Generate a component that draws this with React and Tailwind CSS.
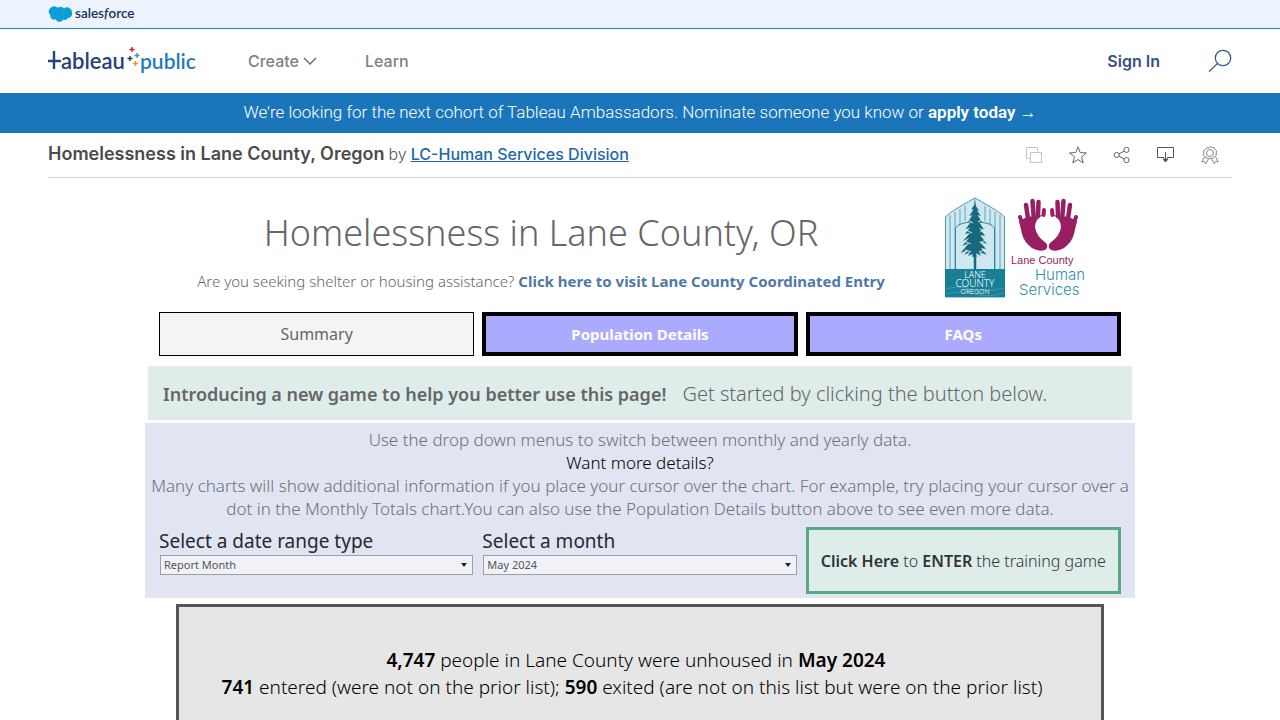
import React from 'react';

const sans = "font-['Inter','Liberation_Sans',sans-serif]";

const SalesforceLogo = () => (
    <a href="#" aria-label="Salesforce" className="block">
        <svg width="88" height="18" viewBox="0 0 88 18">
            <path
                d="M9.8 2.8A4.9 4.9 0 0 1 16 3.5a4.8 4.8 0 0 1 7.9 4.2A4.2 4.2 0 0 1 20 13.1a3.6 3.6 0 0 1-4.7 1.5 4.1 4.1 0 0 1-7.6-.3A3.8 3.8 0 0 1 2.4 10 4.3 4.3 0 0 1 2 3.6a4.8 4.8 0 0 1 7.8-.8Z"
                fill="#0d9dda"
            />
            <text x="27" y="13" fontFamily="Lato, sans-serif" fontSize="13.500" fontWeight="600" fill="#16325c">
                sales<tspan fontStyle="italic">f</tspan>orce
            </text>
        </svg>
    </a>
);

const TableauLogo = () => (
    <a href="#" aria-label="Tableau Public" className="block">
        <svg width="150" height="32" viewBox="0 0 150 32">
            <path d="M0 16h13M6 6v18" stroke="#1f457e" strokeWidth="2.4" fill="none" />
            <text x="13" y="24" fontFamily="Lato, sans-serif" fontSize="22" fontWeight="600" fill="#27407a">ableau</text>
            <g fill="none" strokeWidth="1.4">
                <path d="M84 2v5M81.500 4.500h5" stroke="#c72035" />
                <path d="M89 8v5M86.500 10.500h5" stroke="#5b879b" />
                <path d="M82 11v5M79.500 13.500h5" stroke="#1f3a5f" />
                <path d="M87.500 16v5M85 18.500h5" stroke="#eb912c" />
            </g>
            <text x="92" y="24" fontFamily="Lato, sans-serif" fontSize="21" fontWeight="600" fill="#1f7bc0">public</text>
        </svg>
    </a>
);

const actions = [
    {
        label: 'Make a copy',
        color: '#c4c4c4',
        icon: <path d="M5.500 12.500h-4v-11h11v4M5.500 6.500h11v10h-11z" />,
    },
    {
        label: 'Favorite',
        color: '#666666',
        icon: <path d="m9 .8 2.200 5.800 6.200.3-4.900 3.900 1.700 6.200L9 13.500 3.800 17l1.700-6.200L.6 6.900l6.200-.3z" />,
    },
    {
        label: 'Share',
        color: '#666666',
        icon: (
            <>
                <circle cx="3.700" cy="9" r="2.600" />
                <circle cx="13.500" cy="3.900" r="2.600" />
                <circle cx="13.500" cy="14.100" r="2.600" />
                <path d="m6 7.800 5.200-2.700M6 10.200l5.200 2.700" />
            </>
        ),
    },
    {
        label: 'Download',
        color: '#555555',
        icon: (
            <>
                <path d="M7 11.500H.500v-10h16v10H10M8.500 6v10" />
                <path d="m6 13 2.500 3L11 13z" fill="#555555" />
            </>
        ),
    },
    {
        label: 'Nominate for Viz of the Day',
        color: '#888888',
        icon: (
            <>
                <circle cx="9" cy="7" r="3.500" />
                <path d="m9 .5 1.900 1 2.200.1.900 2 1.700 1.400-.5 2.100.2 2.200-1.900 1.200-1.200 1.800-2.200-.2L9 13l-1.900-1-2.200.1-1-1.900L2.300 9l.6-2-.3-2.200 1.900-1.200 1.200-1.900 2.200.2z" />
                <path d="m3.500 10.800-2.800 5 2.700-.3 1.300 2.400 2.800-5M14.500 10.800l2.800 5-2.700-.3-1.300 2.400-2.800-5" />
            </>
        ),
    },
];

const LaneCountyLogo = () => (
    <svg width="60" height="101" viewBox="0 0 60 101" role="img" aria-label="Lane County Oregon">
        <path d="M.5 100V20Q3 16 30 1q27 15 29.500 19v80z" fill="#cfe7ef" stroke="#4b9caf" />
        <path d="M5 18v54M10 15v57M15 12v18M20 9v15M40 9v15M45 12v18M50 15v57M55 18v54" stroke="#5fa5b8" fill="none" />
        <path d="M10.500 72V31Q14 25 30 25t19.500 6v41" fill="#cfe7ef" stroke="#2c879c" />
        <path
            transform="translate(4.500 0) scale(.85 1)"
            d="m30 1-1 7-3 4 2 1-5 6 4-1-6 8 5-2-7 8 5-1-6 6 6-1-8 8 7-3-8 8 8-3-10 10 9-3-5 5 7-3-2 4 5-2v3h5l-1-4 6 3-2-4 9 3-7-7 6 1-8-8 9 3-8-9 6 1-7-8 6 2-7-9 5 2-6-8 4 1-5-6 3 1-4-5z"
            fill="#176a7d"
        />
        <path d="M30 45v28" stroke="#176a7d" strokeWidth="2.500" />
        <path d="M21 33l6 3M19 44l7 3M41 31l-6 4M43 42l-8 4M20 53l6 2M42 52l-8 3M24 24l4 2M37 22l-4 3" stroke="#cfe7ef" />
        <path d="M0 72h60v28H0z" fill="#197f97" />
        <path d="M1 92q12-4 24 0t34-1M1 97q14-4 28 0t30-1" stroke="#4fa3b5" strokeWidth=".7" fill="none" />
        <g fontFamily="'Noto Sans', sans-serif" fill="#ffffff" textAnchor="middle">
            <text x="30" y="81" fontSize="9">LANE</text>
            <text x="30" y="90" fontSize="10">COUNTY</text>
            <text x="30" y="97" fontSize="7">OREGON</text>
        </g>
    </svg>
);

// left hand, mirrored for the right one
const Hand = () => (
    <g stroke="#981e62" fill="none" strokeLinecap="round">
        <path d="M2 20 7 36" strokeWidth="4" />
        <path d="M8 8 11 28" strokeWidth="4.500" />
        <path d="M14.500 4 16 24" strokeWidth="4.500" />
        <path d="M20.500 5l-.5 14" strokeWidth="4.500" />
        <path d="M26 13l-.5 5" strokeWidth="4" />
        <path
            d="M1 24 9 20 25 18Q17 22 17 30q1 9 11 16 3 4-1 7-6 2-13-2Q6 45 4 37z"
            fill="#981e62"
            stroke="none"
        />
    </g>
);

const HumanServicesLogo = () => (
    <svg width="78" height="101" viewBox="0 0 78 101" role="img" aria-label="Lane County Human Services">
        <g transform="translate(7 0)"><Hand /></g>
        <g transform="translate(67 0) scale(-1 1)"><Hand /></g>
        <g fontFamily="'Liberation Sans', sans-serif">
            <text x="0" y="67" fontSize="11" fill="#981e62">Lane County</text>
            <text x="24" y="83" fontFamily="Inter, sans-serif" fontSize="15" fontWeight="300" fill="#2f8fa6">Human</text>
            <text x="8" y="98" fontFamily="Inter, sans-serif" fontSize="15" fontWeight="300" fill="#2f8fa6">Services</text>
        </g>
    </svg>
);

const filters = [
    { id: 'range-type', label: 'Select a date range type', options: ['Report Month', 'Report Year'] },
    { id: 'month', label: 'Select a month', options: ['May 2024', 'April 2024'] },
];

const SiteHeader = () => (
    <header className={sans}>
        <div className="h-[29px] px-12 flex items-center bg-[#ecf3fd] border-b border-[#1f86c0]">
            <SalesforceLogo />
        </div>
        <div className="h-16 px-12 flex items-center justify-between bg-white">
            <div className="flex items-center">
                <TableauLogo />
                <nav className="ml-[50px] flex items-center gap-12 text-base font-medium text-[#808080]">
                    <button className="flex items-center gap-1">
                        Create
                        <svg width="14" height="8" viewBox="0 0 14 8" fill="none" stroke="#707070" strokeWidth="1.5">
                            <path d="m1 1 6 6 6-6" />
                        </svg>
                    </button>
                    <a href="#">Learn</a>
                </nav>
            </div>
            <div className="flex items-center gap-12">
                <a href="#" className="text-base font-semibold text-[#355085]">Sign In</a>
                <button aria-label="Search">
                    <svg width="24" height="24" viewBox="0 0 24 24" fill="none" stroke="#355c91" strokeWidth="1.3">
                        <circle cx="15" cy="9" r="7.7" />
                        <path d="m9.500 14.500-8.500 8" />
                    </svg>
                </button>
            </div>
        </div>
        <div className="h-10 flex items-center justify-center bg-[#1b75bb] font-['Roboto',sans-serif] text-[17px] font-light text-white">
            <p>
                We're looking for the next cohort of Tableau Ambassadors. Nominate someone you know or{' '}
                <a href="#" className="font-semibold">apply today</a> →
            </p>
        </div>
    </header>
);

const VizTitle = () => (
    <div className={`mx-12 h-[45px] flex items-center justify-between border-b border-[#d4d4d4] ${sans}`}>
        <div className="pb-0.5 flex items-baseline gap-1 text-[#555555]">
            <h1 className="text-lg font-semibold text-[#4b4b4b]">Homelessness in Lane County, Oregon</h1>
            <span className="text-base font-light">by</span>
            <a href="#" className="text-base font-medium text-[#1b69a6] underline">LC-Human Services Division</a>
        </div>
        <div className="flex items-center gap-[26px] pr-[13px]">
            {actions.map(({ label, color, icon }) => (
                <button key={label} aria-label={label}>
                    <svg width="18" height="18" viewBox="0 0 18 18" fill="none" stroke={color}>
                        {icon}
                    </svg>
                </button>
            ))}
        </div>
    </div>
);

const Dashboard = () => (
    <main className="max-w-[990px] mx-auto pt-[19px] font-['Noto_Sans',sans-serif] font-light text-[#666666]">
        <div className="flex">
            <div className="w-[788px] pl-1 text-center">
                <h2 className="pt-2 text-4xl leading-[56px]">Homelessness in Lane County, OR</h2>
                <p className="pt-2 text-[15px] leading-6">
                    Are you seeking shelter or housing assistance?{' '}
                    <a href="#" className="font-bold text-[#4e79a7]">Click here to visit Lane County Coordinated Entry</a>
                </p>
            </div>
            <div className="ml-3 flex gap-1.5">
                <LaneCountyLogo />
                <HumanServicesLogo />
            </div>
        </div>

        <div className="mt-3.5 px-3.5 grid grid-cols-3 gap-2 text-[15px]">
            <button className="h-11 border border-black bg-[#f4f4f4] text-base font-normal">Summary</button>
            <button className="h-11 border-4 border-black bg-[#aaaaff] font-bold text-white">Population Details</button>
            <button className="h-11 border-4 border-black bg-[#aaaaff] font-bold text-white">FAQs</button>
        </div>

        <div className="mt-2.5 mx-[3px] h-[54px] pt-0.5 px-[15px] flex items-center gap-4 bg-[#dfedea]">
            <strong className="text-lg font-semibold">Introducing a new game to help you better use this page!</strong>
            <span className="text-xl">Get started by clicking the button below.</span>
        </div>

        <section className="mt-[3px] px-1 pt-[5px] pb-1 bg-[#e1e5f1]">
            <div className="text-center text-[17px] leading-[23px] text-[#6e7079]">
                <p>Use the drop down menus to switch between monthly and yearly data.</p>
                <p className="text-black">Want more details?</p>
                <p>
                    Many charts will show additional information if you place your cursor over the chart. For example, try placing your cursor over a
                    <br />
                    dot in the Monthly Totals chart.You can also use the Population Details button above to see even more data.
                </p>
            </div>
            <div className="mt-[7px] px-2.5 grid grid-cols-3 gap-2">
                {filters.map(({ id, label, options }) => (
                    <div key={id}>
                        <label htmlFor={id} className="block text-[19px] leading-7 font-normal text-[#26282f]">{label}</label>
                        <div className="relative mx-px">
                            <select
                                id={id}
                                className="block w-full h-5 pl-[3px] appearance-none border border-[#9c9fa8] bg-[#f0f2f8] text-[11px] font-normal text-[#555555]"
                            >
                                {options.map((option) => <option key={option}>{option}</option>)}
                            </select>
                            <svg className="absolute right-1.5 top-2 pointer-events-none" width="6" height="4" viewBox="0 0 6 4">
                                <path d="M0 0h6L3 4z" fill="#222222" />
                            </svg>
                        </div>
                    </div>
                ))}
                <button className="h-[67px] border-[3px] border-[#59a985] bg-[#dfedea] text-base text-[#333333]">
                    <b className="font-semibold">Click Here</b> to <b className="font-semibold">ENTER</b> the training game
                </button>
            </div>
        </section>

        <section className="mt-1.5 mx-[31px] pt-10 pb-12 border-[3px] border-[#555555] bg-[#e6e6e6] text-center text-[19px] leading-[27px] text-black">
            <p className="pr-2"><b className="font-semibold">4,747</b> people in Lane County were unhoused in <b className="font-semibold">May 2024</b></p>
            <p className="pr-4"><b className="font-semibold">741</b> entered (were not on the prior list); <b className="font-semibold">590</b> exited (are not on this list but were on the prior list)</p>
        </section>
    </main>
);

const App = () => (
    <div className="min-h-screen bg-white">
        <SiteHeader />
        <VizTitle />
        <Dashboard />
    </div>
);

export default App;
